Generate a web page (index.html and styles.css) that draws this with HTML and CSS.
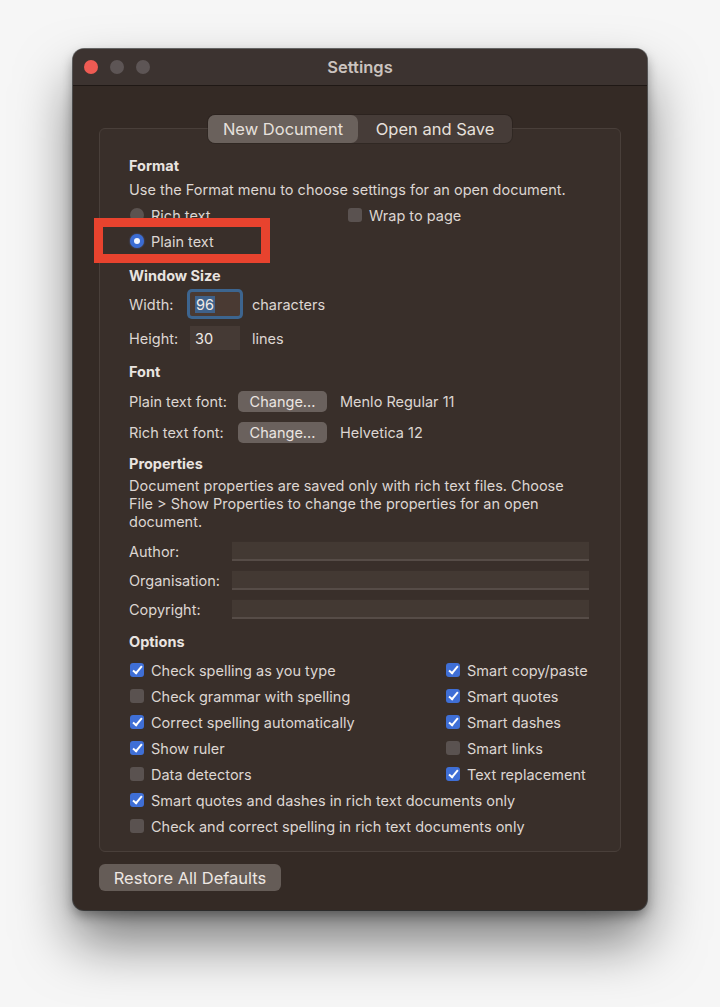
FILE: index.html
```html
<!DOCTYPE html>
<html lang="en">
<head>
    <meta charset="UTF-8">
    <meta name="viewport" content="width=device-width, initial-scale=1.0">
    <title>Settings</title>
    <link rel="stylesheet" href="styles.css">
</head>
<body>

    <div class="window">
        <!-- Title bar -->
        <div class="titlebar">
            <div class="lights">
                <span class="light close"></span>
                <span class="light"></span>
                <span class="light"></span>
            </div>
            <div class="title">Settings</div>
            <div></div>
        </div>

        <div class="content">
            <div class="tabs">
                <span class="tab active">New Document</span>
                <span class="tab">Open and Save</span>
            </div>

            <div class="group">
                <!-- Format -->
                <div class="row heading">Format</div>
                <div class="row mt-2">Use the Format menu to choose settings for an open document.</div>
                <div class="row format-row mt-4">
                    <span class="choice"><span class="radio"></span>Rich text</span>
                    <span class="choice"><span class="check"></span>Wrap to page</span>
                </div>
                <div class="row mt-4">
                    <span class="choice"><span class="radio on"></span>Plain text</span>
                </div>

                <!-- Window Size -->
                <div class="row heading mt-12">Window Size</div>
                <div class="row mt-7">
                    <span class="size-label">Width:</span>
                    <span class="num focus"><span class="selected">96</span></span>
                    <span class="unit">characters</span>
                </div>
                <div class="row mt-12">
                    <span class="size-label">Height:</span>
                    <span class="num">30</span>
                    <span class="unit">lines</span>
                </div>

                <!-- Font -->
                <div class="row heading mt-11">Font</div>
                <div class="row mt-8">
                    <span class="font-label">Plain text font:</span>
                    <span class="btn">Change...</span>
                    <span class="font-name">Menlo Regular 11</span>
                </div>
                <div class="row mt-9">
                    <span class="font-label">Rich text font:</span>
                    <span class="btn">Change...</span>
                    <span class="font-name">Helvetica 12</span>
                </div>

                <!-- Properties -->
                <div class="row heading mt-9">Properties</div>
                <p class="note">Document properties are saved only with rich text files. Choose File &gt; Show Properties to change the properties for an open document.</p>
                <div class="row mt-9">
                    <span class="prop-label">Author:</span>
                    <span class="prop-field"></span>
                </div>
                <div class="row mt-7">
                    <span class="prop-label">Organisation:</span>
                    <span class="prop-field"></span>
                </div>
                <div class="row mt-7">
                    <span class="prop-label">Copyright:</span>
                    <span class="prop-field"></span>
                </div>

                <!-- Options -->
                <div class="row heading mt-10">Options</div>
                <div class="options">
                    <span class="choice"><span class="check on"></span>Check spelling as you type</span>
                    <span class="choice"><span class="check on"></span>Smart copy/paste</span>
                    <span class="choice"><span class="check"></span>Check grammar with spelling</span>
                    <span class="choice"><span class="check on"></span>Smart quotes</span>
                    <span class="choice"><span class="check on"></span>Correct spelling automatically</span>
                    <span class="choice"><span class="check on"></span>Smart dashes</span>
                    <span class="choice"><span class="check on"></span>Show ruler</span>
                    <span class="choice"><span class="check"></span>Smart links</span>
                    <span class="choice"><span class="check"></span>Data detectors</span>
                    <span class="choice"><span class="check on"></span>Text replacement</span>
                    <span class="choice wide"><span class="check on"></span>Smart quotes and dashes in rich text documents only</span>
                    <span class="choice wide"><span class="check"></span>Check and correct spelling in rich text documents only</span>
                </div>
            </div>

            <button class="restore">Restore All Defaults</button>
        </div>

        <!-- Annotation box -->
        <div class="highlight"></div>
    </div>

</body>
</html>
```

FILE: styles.css
```css
/* General Styling */
body {
    margin: 0;
    padding: 49px 0 0 73px;
    min-height: 100vh;
    box-sizing: border-box;
    background: #f6f6f6;
    font-family: Inter, "Noto Sans", sans-serif;
    font-size: 14.5px;
    color: #ddd6d2;
}

.window {
    position: relative;
    width: 574px;
    background: #342a25;
    border-radius: 11px;
    box-shadow: 0 0 0 1px rgba(0, 0, 0, 0.55), 0 6px 12px rgba(0, 0, 0, 0.35), 0 32px 55px rgba(0, 0, 0, 0.5);
}

/* Title bar */
.titlebar {
    display: grid;
    grid-template-columns: 1fr auto 1fr;
    align-items: center;
    height: 36px;
    background: #3c3330;
    border-bottom: 1px solid #1f1815;
    border-radius: 11px 11px 0 0;
}

.lights {
    display: flex;
    gap: 12px;
    padding-left: 11px;
}

.light {
    width: 14px;
    height: 14px;
    border-radius: 50%;
    background: #5d5555;
}

.light.close {
    background: #ee5b53;
}

.title {
    font-size: 16.5px;
    font-weight: 600;
    color: #cbc3bf;
}

/* Content */
.content {
    padding: 29px 26px 19px;
}

.tabs {
    position: relative;
    z-index: 1;
    display: flex;
    width: fit-content;
    height: 28px;
    margin: 0 auto -15px;
    background: #463c38;
    border-radius: 7px;
    box-shadow: 0 0 0 1px rgba(0, 0, 0, 0.15);
}

.tab {
    display: flex;
    align-items: center;
    justify-content: center;
    width: 154px;
    font-size: 16.5px;
    color: #e6e0dc;
    border-radius: 7px;
}

.tab.active {
    width: 150px;
    background: #6a615c;
}

.group {
    padding: 25px 20px 14px 29px;
    background: #392f2a;
    border: 1px solid #493f3a;
    border-radius: 6px;
}

.row {
    display: flex;
    align-items: center;
    height: 22px;
    white-space: nowrap;
}

.heading {
    font-weight: 700;
    color: #e9e4e0;
}

.mt-2 { margin-top: 2px; }
.mt-4 { margin-top: 4px; }
.mt-7 { margin-top: 7px; }
.mt-8 { margin-top: 8px; }
.mt-9 { margin-top: 9px; }
.mt-10 { margin-top: 10px; }
.mt-11 { margin-top: 11px; }
.mt-12 { margin-top: 12px; }

/* Radios and checkboxes */
.choice {
    display: flex;
    align-items: center;
    gap: 7px;
    height: 22px;
    white-space: nowrap;
}

.format-row .choice:first-child {
    width: 219px;
}

.radio {
    width: 14px;
    height: 14px;
    border-radius: 50%;
    background: #5b5350;
    margin-left: 1px;
    display: flex;
    align-items: center;
    justify-content: center;
}

.radio.on {
    background: #3b6cd3;
    box-shadow: 0 0 2px rgba(90, 140, 255, 0.6);
}

.radio.on::after {
    content: '';
    width: 6px;
    height: 6px;
    border-radius: 50%;
    background: #f2f6ff;
}

.check {
    position: relative;
    width: 14px;
    height: 14px;
    border-radius: 3px;
    background: #5a5250;
}

.check.on {
    background: #3f6fd6;
}

.check.on::after {
    content: '';
    position: absolute;
    left: 5px;
    top: 1px;
    width: 3px;
    height: 8px;
    border: solid #fff;
    border-width: 0 2px 2px 0;
    transform: rotate(40deg);
}

/* Window size */
.size-label {
    width: 61px;
}

.num {
    display: flex;
    align-items: center;
    box-sizing: border-box;
    width: 50px;
    height: 24px;
    padding-left: 5px;
    background: #453a35;
    color: #efeae6;
}

.num.focus {
    background: #4a3a33;
    box-shadow: 0 0 0 3px #3d658f;
    border-radius: 2px;
}

.selected {
    background: #3f618a;
    padding: 0 1px;
}

.unit {
    margin-left: 12px;
}

/* Font */
.font-label {
    width: 109px;
}

.btn {
    display: flex;
    align-items: center;
    justify-content: center;
    width: 89px;
    height: 21px;
    background: #6a615d;
    border-radius: 5px;
    color: #ebe5e1;
}

.font-name {
    margin-left: 13px;
}

/* Properties */
.note {
    margin: 3px 0 0;
    line-height: 18px;
    width: 445px;
}

.prop-label {
    width: 103px;
}

.prop-field {
    box-sizing: border-box;
    width: 357px;
    height: 20px;
    background: #433933;
    border-top: 1px solid #3a302b;
    border-bottom: 2px solid #564c47;
}

/* Options */
.options {
    display: grid;
    grid-template-columns: 316px auto;
    grid-auto-rows: 22px;
    row-gap: 4px;
    margin-top: 7px;
}

.options .choice {
    padding-left: 1px;
}

.options .wide {
    grid-column: 1 / 3;
}

/* Bottom button */
.restore {
    display: block;
    width: 182px;
    height: 27px;
    margin-top: 12px;
    padding: 0;
    border: none;
    border-radius: 6px;
    background: #655c57;
    color: #ede7e3;
    font-family: inherit;
    font-size: 16.5px;
}

/* Red annotation */
.highlight {
    position: absolute;
    left: 21px;
    top: 169px;
    width: 176px;
    height: 45px;
    box-sizing: border-box;
    border: 9px solid #e8432e;
}
```
